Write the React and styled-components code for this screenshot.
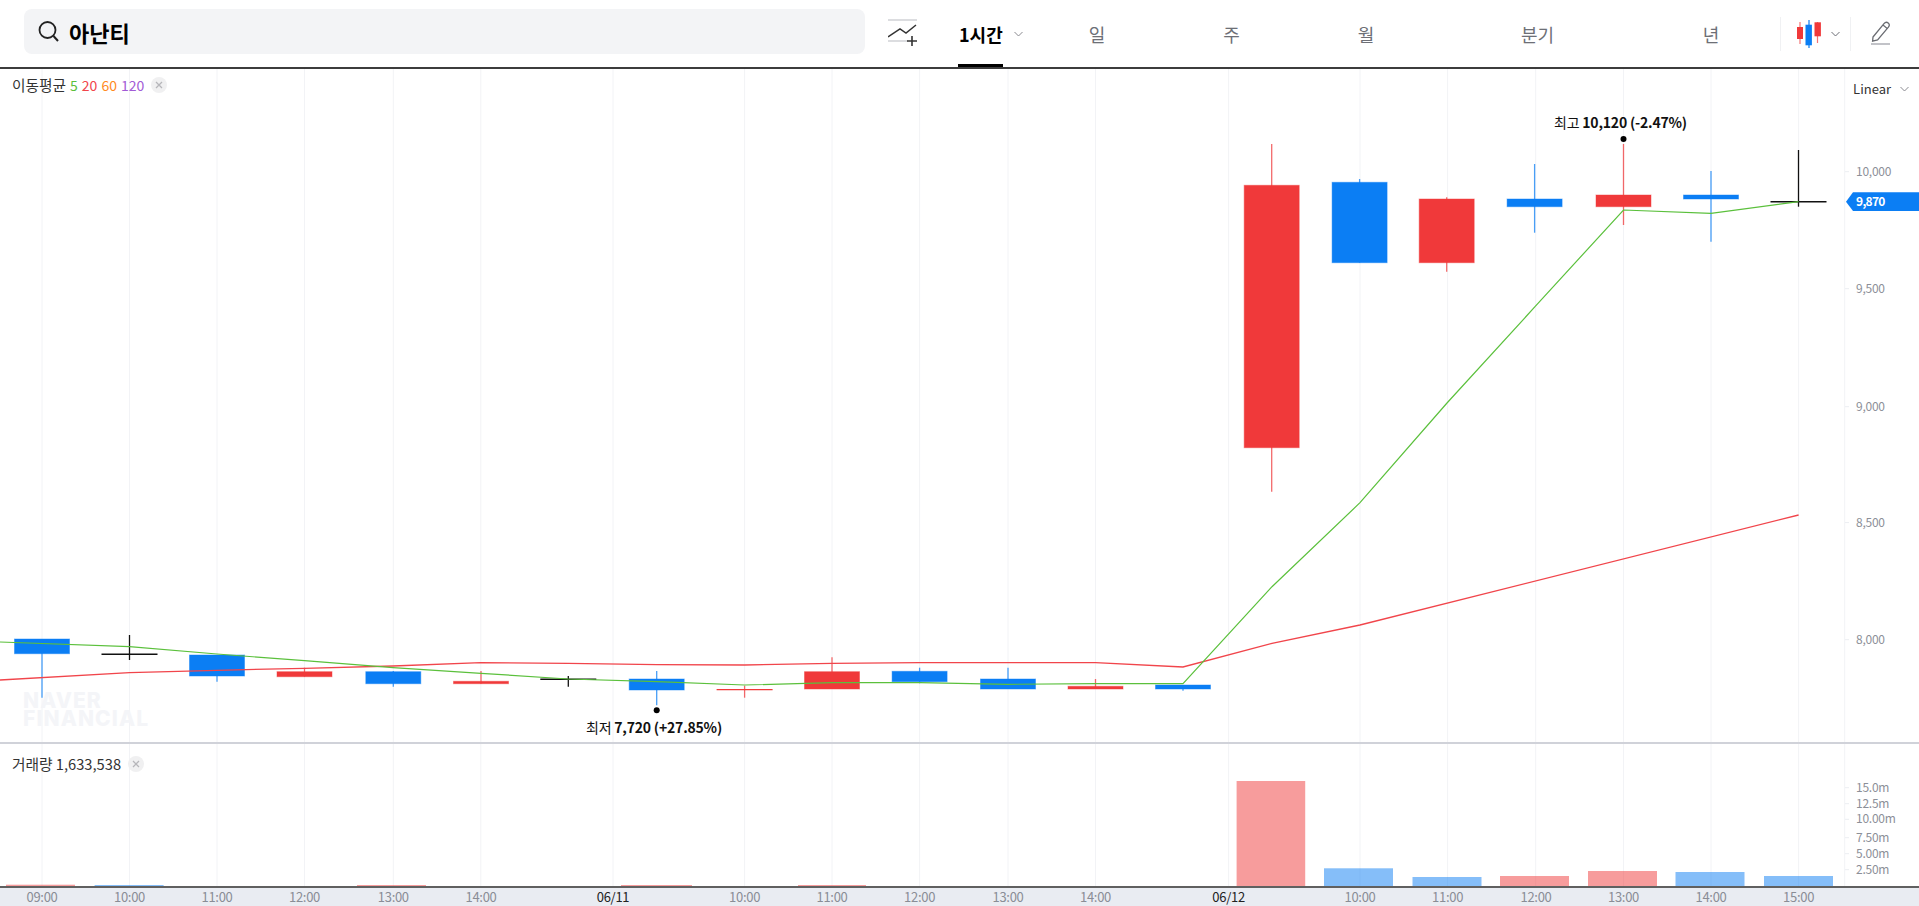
import React from "react";
import styled, { createGlobalStyle } from "styled-components";

const FONT = `"Noto Sans CJK KR", "Noto Sans", "Liberation Sans", sans-serif`;
const BLUE = "#0b7ef4";
const RED = "#f0393a";
const GREEN = "#5bc03c";
const LINE_RED = "#f1454b";
const GRID = "#f2f3f6";

const Global = createGlobalStyle`
  html, body { margin: 0; padding: 0; background: #fff; }
  body { font-family: ${FONT}; overflow: hidden; }
  * { box-sizing: border-box; }
`;

const Page = styled.div`
  width: 1919px;
  height: 906px;
  display: flex;
  flex-direction: column;
  overflow: hidden;
  background: #fff;
`;

const Header = styled.header`
  height: 69px;
  flex: none;
  display: flex;
  align-items: flex-start;
  padding-left: 24px;
  border-bottom: 2px solid #3c3c3c;
`;

const SearchBox = styled.div`
  width: 841px;
  height: 45px;
  margin-top: 9px;
  display: flex;
  align-items: center;
  gap: 9px;
  padding-left: 14px;
  background: #f3f4f6;
  border-radius: 8px;
`;

const SearchText = styled.span`
  font-size: 22px;
  font-weight: 700;
  color: #000;
  line-height: 1;
`;

const IndicatorAdd = styled.button`
  width: 30px;
  height: 28px;
  margin: 18px 0 0 23px;
  padding: 0;
  border: 0;
  background: none;
  display: block;
`;

const ActiveTab = styled.div`
  position: relative;
  width: 72px;
  height: 67px;
  margin-left: 40px;
  flex: none;
  display: flex;
  align-items: center;
  gap: 11px;
  padding-left: 1px;
  font-size: 18px;
  font-weight: 700;
  color: #000;
  &::after {
    content: "";
    position: absolute;
    left: 0;
    bottom: 0;
    width: 45px;
    height: 3px;
    background: #000;
  }
`;

const Tab = styled.div`
  width: ${(p) => p.$w}px;
  height: 67px;
  flex: none;
  display: flex;
  align-items: center;
  justify-content: center;
  font-size: 18px;
  color: #6d6f76;
`;

const CandleButton = styled.div`
  width: 71px;
  height: 34px;
  margin-top: 17px;
  flex: none;
  display: flex;
  align-items: center;
  gap: 8px;
  padding-left: 16px;
  border-left: 1px solid #f0f1f3;
  border-right: 1px solid #f0f1f3;
`;

const PencilButton = styled.div`
  margin: 21px 0 0 20px;
  width: 20px;
  height: 24px;
`;

const PricePane = styled.section`
  position: relative;
  flex: none;
  height: 675px;
  border-bottom: 2px solid #d0d2d9;
`;

const VolumePane = styled.section`
  position: relative;
  flex: none;
  height: 142px;
`;

const Chart = styled.svg`
  display: block;
  font-family: ${FONT};
`;

const Legend = styled.div`
  position: absolute;
  left: 12px;
  top: ${(p) => p.$top}px;
  height: 18px;
  display: flex;
  align-items: center;
  font-size: 14.7px;
  color: #333;
  line-height: 18px;
  white-space: nowrap;
`;

const Period = styled.span`
  color: ${(p) => p.$c};
  margin-left: 4px;
  font-size: 14px;
`;

const CloseDot = styled.span`
  width: 16px;
  height: 16px;
  margin-left: 7px;
  border-radius: 50%;
  background: #f0f0f1;
  color: #b4b4b8;
  display: flex;
  align-items: center;
  justify-content: center;
`;

const ScaleSelect = styled.div`
  position: absolute;
  right: 10px;
  top: 11px;
  display: flex;
  align-items: center;
  gap: 9px;
  font-size: 13px;
  color: #333;
  line-height: 18px;
`;

const TimeAxis = styled.footer`
  flex: 1;
  background: #e9ecf2;
  border-top: 2px solid #606060;
`;

const Chevron = ({ color = "#8a8a90" }) => (
  <svg width="9" height="6" viewBox="0 0 9 6" style={{ flex: "none" }}>
    <path d="M.5 1 4.5 5 8.5 1" fill="none" stroke={color} strokeWidth="1" />
  </svg>
);

const Cross = () => (
  <svg width="8" height="8" viewBox="0 0 8 8">
    <path d="M1 1 7 7M7 1 1 7" stroke="#b6b6ba" strokeWidth="1.3" />
  </svg>
);

const gridXs = [42, 129.5, 217, 304.5, 393.3, 480.8, 613, 744.6, 832, 919.6, 1008, 1095.5, 1228.6, 1360, 1447.6, 1535.7, 1623.5, 1711, 1798.6, 1844.7];

const candles = [
  { x: 42, c: "b", t: 639, b: 653.7, hi: 639, lo: 697.7 },
  { x: 129.5, c: "k", t: 654.3, b: 654.3, hi: 635, lo: 660 },
  { x: 217, c: "b", t: 655, b: 676, hi: 655, lo: 681.7 },
  { x: 304.5, c: "r", t: 671.7, b: 676.7, hi: 667.7, lo: 676.7 },
  { x: 393.3, c: "b", t: 671.7, b: 683.7, hi: 671, lo: 686.7 },
  { x: 481, c: "r", t: 681.3, b: 683.7, hi: 671, lo: 683.7 },
  { x: 568.3, c: "k", t: 679.3, b: 679.3, hi: 676, lo: 686.7 },
  { x: 656.7, c: "b", t: 679, b: 690, hi: 671, lo: 705.3 },
  { x: 744.6, c: "r", t: 689.7, b: 689.7, hi: 685.7, lo: 697.7 },
  { x: 832, c: "r", t: 671.7, b: 689, hi: 657.3, lo: 689 },
  { x: 919.6, c: "b", t: 671.3, b: 681.7, hi: 667.7, lo: 683.3 },
  { x: 1008, c: "b", t: 679, b: 689, hi: 667.7, lo: 689 },
  { x: 1095.5, c: "r", t: 686.3, b: 689, hi: 679, lo: 689 },
  { x: 1183, c: "b", t: 685, b: 689, hi: 685, lo: 690.7 },
  { x: 1271.7, c: "r", t: 185.3, b: 447.7, hi: 144, lo: 491.7 },
  { x: 1359.6, c: "b", t: 182.3, b: 262.7, hi: 179, lo: 262.7 },
  { x: 1446.7, c: "r", t: 199, b: 262.7, hi: 197.3, lo: 271.7 },
  { x: 1534.6, c: "b", t: 199, b: 206.7, hi: 164, lo: 232.7 },
  { x: 1623.5, c: "r", t: 195, b: 206.7, hi: 144, lo: 225 },
  { x: 1711, c: "b", t: 195, b: 199, hi: 171, lo: 241.7 },
  { x: 1798.5, c: "k", t: 201.7, b: 201.7, hi: 150, lo: 206.7 },
];

const candleColor = { b: BLUE, r: RED, k: "#111" };

const green = "0,642 129.5,646.7 217,654 304.5,660.7 393,667.7 481,673.3 568,679 657,681.7 744.6,685 832,682.7 920,682.7 1008,684.3 1095.5,683.7 1183,683.7 1272,586.7 1360,502.7 1447,403 1535,306.7 1623.5,210 1711,213.3 1798.5,201.7";
const redLine = "0,680 129.5,672.7 217,670.3 304.5,668.3 393,666 481,662.7 568,663.3 657,664.7 744.6,665 832,663.3 920,662.7 1008,662.7 1095.5,662.7 1183,667 1272,643.3 1360,625 1798.6,515";

const priceTicks = [
  ["10,000", 171.7],
  ["9,500", 288.7],
  ["9,000", 406.7],
  ["8,500", 522.6],
  ["8,000", 639.7],
];

const volTicks = [
  ["15.0m", 787.7],
  ["12.5m", 803.7],
  ["10.00m", 819.3],
  ["7.50m", 837.7],
  ["5.00m", 853.7],
  ["2.50m", 869.7],
];

const volBars = [
  { x: 6, w: 69, t: 884.7, c: RED },
  { x: 94.6, w: 69, t: 885, c: BLUE },
  { x: 357, w: 69, t: 885, c: RED },
  { x: 621, w: 71, t: 885, c: RED },
  { x: 798, w: 68, t: 885, c: RED },
  { x: 1236.6, w: 68.6, t: 781, c: RED },
  { x: 1324, w: 69, t: 868.3, c: BLUE },
  { x: 1412.5, w: 69, t: 877, c: BLUE },
  { x: 1500, w: 69, t: 876, c: RED },
  { x: 1588, w: 69, t: 871, c: RED },
  { x: 1675.5, w: 69, t: 872, c: BLUE },
  { x: 1764, w: 69, t: 876, c: BLUE },
];

const timeTicks = [
  ["09:00", 42], ["10:00", 129.5], ["11:00", 217], ["12:00", 304.5], ["13:00", 393.3], ["14:00", 481],
  ["06/11", 613, true], ["10:00", 744.6], ["11:00", 832], ["12:00", 919.6], ["13:00", 1008], ["14:00", 1095.5],
  ["06/12", 1228.6, true], ["10:00", 1360], ["11:00", 1447.6], ["12:00", 1536], ["13:00", 1623.5], ["14:00", 1711], ["15:00", 1798.6],
];

const Candle = ({ d }) => {
  const col = candleColor[d.c];
  const flat = d.t === d.b;
  return (
    <g>
      <line x1={d.x} x2={d.x} y1={d.hi} y2={d.lo} stroke={col} strokeWidth="1.3" opacity={d.c === "k" ? 1 : 0.75} />
      {flat ? (
        <line x1={d.x - 28} x2={d.x + 28} y1={d.t} y2={d.t} stroke={col} strokeWidth={d.c === "k" ? 1.5 : 1.2} />
      ) : (
        <rect x={d.x - 27.5} y={d.t} width={55} height={d.b - d.t} fill={col} stroke={col} strokeOpacity=".45" strokeWidth="1" />
      )}
    </g>
  );
};

const Grid = ({ y1, y2 }) =>
  gridXs.map((x) => <line key={x} x1={x} x2={x} y1={y1} y2={y2} stroke={GRID} strokeWidth="1" />);

const AxisLabels = ({ ticks }) =>
  ticks.map(([t, y]) => (
    <g key={t}>
      <line x1="1845" x2="1849" y1={y} y2={y} stroke="#eceef2" />
      <text x="1856" y={y + 4} fontSize="12" letterSpacing="-0.25" fill="#8c8f98">{t}</text>
    </g>
  ));

export default function App() {
  return (
    <Page>
      <Global />
      <Header>
        <SearchBox>
          <svg width="22" height="24" viewBox="0 0 22 24">
            <circle cx="9.5" cy="10" r="8" fill="none" stroke="#222" strokeWidth="1.8" />
            <path d="M15.5 16 20 21" stroke="#222" strokeWidth="2" />
          </svg>
          <SearchText>아난티</SearchText>
        </SearchBox>
        <IndicatorAdd aria-label="보조지표">
          <svg width="30" height="28" viewBox="0 0 30 28">
            <path d="M0 2H29" stroke="#d4d5d9" strokeWidth="1.6" />
            <path d="M0 23H20" stroke="#d4d5d9" strokeWidth="1.6" />
            <path d="M0 19 12 11 18 15 28 7" fill="none" stroke="#333" strokeWidth="1.5" />
            <path d="M24 18V28M19 23H29" stroke="#333" strokeWidth="1.6" />
          </svg>
        </IndicatorAdd>
        <ActiveTab>
          1시간
          <Chevron />
        </ActiveTab>
        <Tab $w={134}>일</Tab>
        <Tab $w={135}>주</Tab>
        <Tab $w={134}>월</Tab>
        <Tab $w={209}>분기</Tab>
        <Tab $w={138}>년</Tab>
        <CandleButton>
          <svg width="26" height="28" viewBox="0 0 26 28">
            <path d="M3 2V24" stroke={RED} strokeWidth="1.2" opacity=".7" />
            <rect x="0" y="7" width="6" height="12" fill={RED} />
            <path d="M12 0V28" stroke={BLUE} strokeWidth="1.2" />
            <rect x="8.5" y="4.7" width="6.4" height="20.6" fill={BLUE} />
            <path d="M20.5 2V23" stroke={RED} strokeWidth="1.2" opacity=".7" />
            <rect x="17.5" y="2.3" width="6.4" height="14" fill={RED} />
          </svg>
          <Chevron color="#6d6f76" />
        </CandleButton>
        <PencilButton>
          <svg width="20" height="24" viewBox="0 0 20 24">
            <path d="M2 16 13 2.6c1.2-1.4 3-1.6 4.2-.6s1.3 2.8.2 4.2L6.6 19 1.6 20.2Z" fill="none" stroke="#6a6c72" strokeWidth="1.3" />
            <path d="M12 4 16.2 7.5" stroke="#6a6c72" strokeWidth="1.2" />
            <path d="M0 23H19" stroke="#a8aab0" strokeWidth="1.4" />
          </svg>
        </PencilButton>
      </Header>

      <PricePane>
        <Chart width="1919" height="673" viewBox="0 69 1919 673">
          <Grid y1={69} y2={742} />
          <text fontSize="21" fontWeight="800" fontFamily="Inter, sans-serif" fill="#f4f5f8" letterSpacing="1.1">
            <tspan x="23" y="708">NAVER</tspan>
            <tspan x="23" y="726">FINANCIAL</tspan>
          </text>
          {candles.map((d) => <Candle key={d.x} d={d} />)}
          <polyline points={redLine} fill="none" stroke={LINE_RED} strokeWidth="1.3" />
          <polyline points={green} fill="none" stroke={GREEN} strokeWidth="1.2" />
          <circle cx="656.7" cy="710.3" r="3" fill="#000" />
          <text x="586" y="733" fontSize="14" fill="#111" letterSpacing="-0.2">
            최저 <tspan fontWeight="700">7,720 (+27.85%)</tspan>
          </text>
          <circle cx="1623.5" cy="139" r="3" fill="#000" />
          <text x="1554" y="127.5" fontSize="14" fill="#111" letterSpacing="-0.2">
            최고 <tspan fontWeight="700">10,120 (-2.47%)</tspan>
          </text>
          <AxisLabels ticks={priceTicks} />
          <polygon points="1846,201.7 1853,192.3 1919,192.3 1919,211 1853,211" fill={BLUE} />
          <text x="1856" y="206" fontSize="12" fontWeight="700" letterSpacing="-0.7" fill="#fff">9,870</text>
        </Chart>
        <Legend $top={7}>
          이동평균
          <Period $c="#5bc03c">5</Period>
          <Period $c="#f1454b">20</Period>
          <Period $c="#ff8a1e">60</Period>
          <Period $c="#a25bd6">120</Period>
          <CloseDot><Cross /></CloseDot>
        </Legend>
        <ScaleSelect>
          Linear
          <Chevron />
        </ScaleSelect>
      </PricePane>

      <VolumePane>
        <Chart width="1919" height="142" viewBox="0 744 1919 142">
          <Grid y1={744} y2={886} />
          {volBars.map((b) => (
            <rect key={b.x} x={b.x} y={b.t} width={b.w} height={886 - b.t} fill={b.c} opacity=".5" />
          ))}
          <AxisLabels ticks={volTicks} />
        </Chart>
        <Legend $top={11}>
          거래량 1,633,538
          <CloseDot><Cross /></CloseDot>
        </Legend>
      </VolumePane>

      <TimeAxis>
        <Chart width="1919" height="18" viewBox="0 888 1919 18">
          {timeTicks.map(([t, x, strong]) => (
            <text key={t + x} x={x} y="902" textAnchor="middle" fontSize="13" letterSpacing="-0.3" fill={strong ? "#222" : "#8a8d96"}>{t}</text>
          ))}
        </Chart>
      </TimeAxis>
    </Page>
  );
}
